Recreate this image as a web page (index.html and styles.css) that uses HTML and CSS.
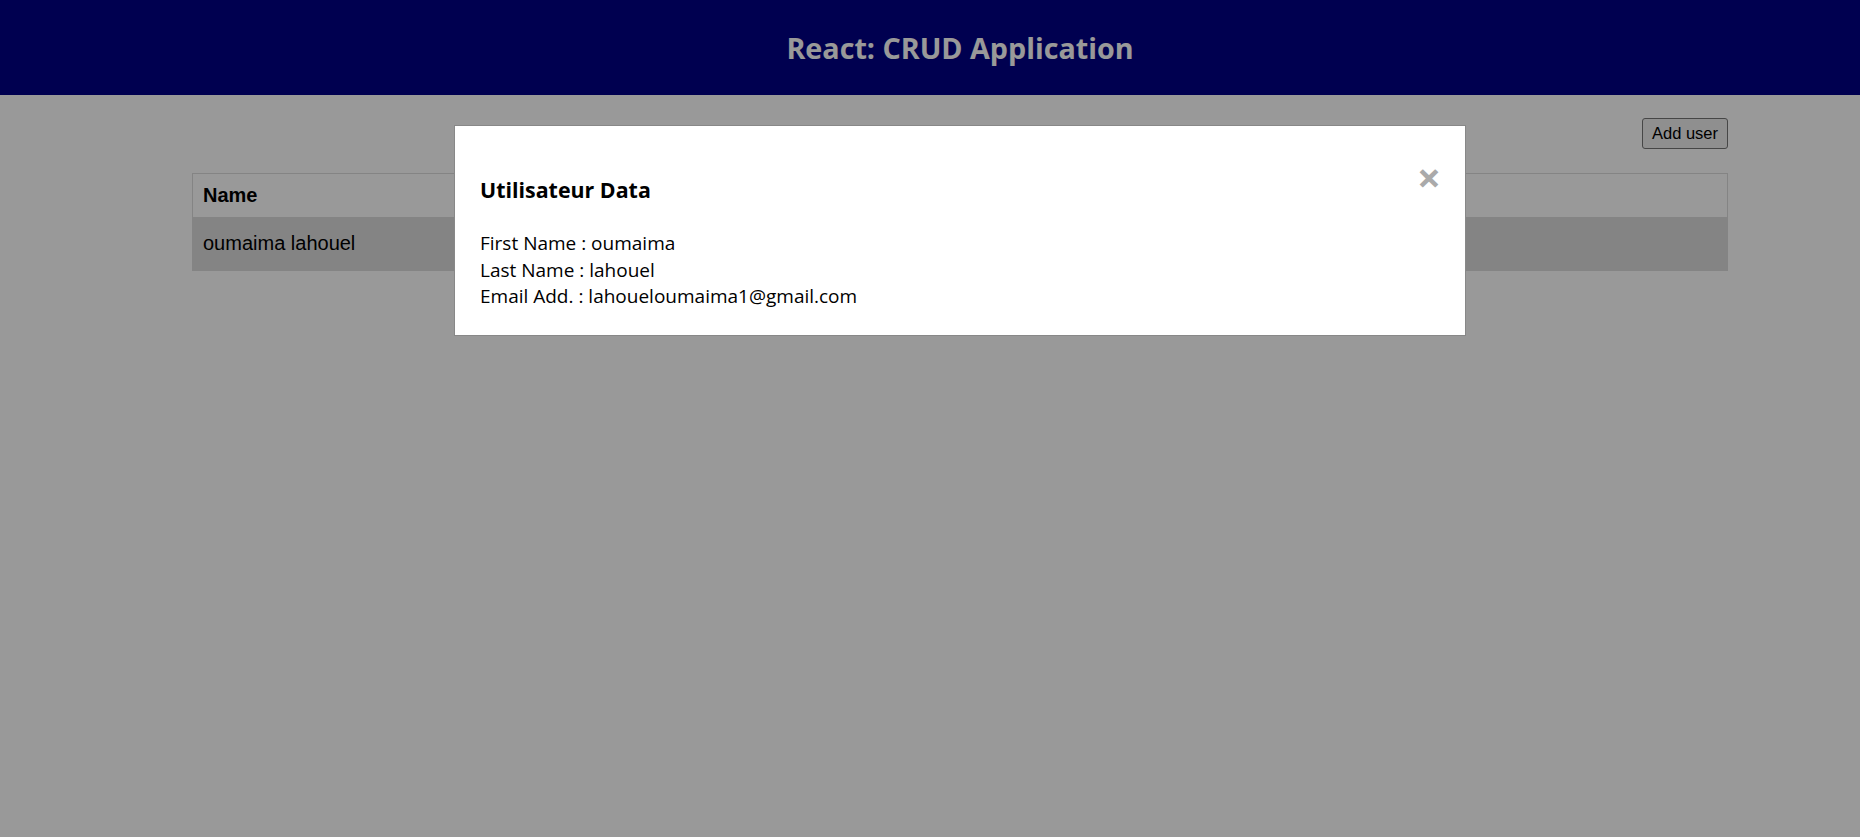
FILE: index.html
```html
<!DOCTYPE html>
<html lang="fr">
<head>
<meta charset="utf-8">
<title>React: CRUD Application</title>
<link rel="stylesheet" href="styles.css">
</head>
<body>
<header class="app-header">
  <h1 class="app-title">React: CRUD Application</h1>
</header>
<main class="content">
  <div class="toolbar">
    <button class="add-btn" type="button">Add user</button>
  </div>
  <table class="users">
    <thead>
      <tr><th>Name</th><th></th></tr>
    </thead>
    <tbody>
      <tr><td>oumaima lahouel</td><td></td></tr>
    </tbody>
  </table>
</main>
<div class="overlay">
  <div class="modal">
    <span class="close">&times;</span>
    <h3 class="modal-title">Utilisateur Data</h3>
    <div class="modal-body">
      <div>First Name : oumaima</div>
      <div>Last Name : lahouel</div>
      <div>Email Add. : lahoueloumaima1@gmail.com</div>
    </div>
  </div>
</div>
</body>
</html>
```
FILE: styles.css
```css
html, body {
  margin: 0;
  padding: 0;
  height: 100%;
}
body {
  background: #ffffff;
  font-family: "Liberation Sans", Arial, sans-serif;
  overflow: hidden;
}
.app-header {
  height: 95px;
  background: #000086;
  display: flex;
  align-items: center;
  justify-content: center;
  padding-left: 60px;
}
.app-title {
  margin: 0;
  color: #ffffff;
  font-family: "Open Sans", "Noto Sans", sans-serif;
  font-weight: 700;
  font-size: 28.7px;
}
.content {
  padding: 0 132px 0 192px;
}
.toolbar {
  display: flex;
  justify-content: flex-end;
  padding-top: 23px;
  height: 31px;
}
.add-btn {
  font-family: "Liberation Sans", Arial, sans-serif;
  font-size: 16.5px;
  height: 31px;
  padding: 0 9px;
  background: #efefef;
  border: 1px solid #767676;
  border-radius: 3px;
  color: #000;
}
.users {
  margin-top: 24px;
  width: 100%;
  border-collapse: collapse;
  border: 1px solid #dddddd;
  font-size: 20px;
  color: #000;
}
.users th {
  text-align: left;
  padding: 10px 10px;
  height: 23px;
  border-bottom: 1px solid #dddddd;
}
.users td {
  background: #dddddd;
  padding: 14px 10px 15px;
}
.overlay {
  position: fixed;
  inset: 0;
  background: rgba(0, 0, 0, 0.4);
  padding-left: 60px;
  padding-top: 125px;
  display: flex;
  justify-content: center;
  align-items: flex-start;
}
.modal {
  position: relative;
  width: 961px;
  background: #fff;
  border: 1px solid #888;
  padding: 20px 24px 25px 25px;
  font-family: "Open Sans", "Noto Sans", sans-serif;
  color: #000;
}
.close {
  position: absolute;
  top: 30px;
  right: 24px;
  color: #aaaaaa;
  font-size: 42px;
  font-weight: 700;
  line-height: 42px;
}
.modal-title {
  margin: 29px 0 0;
  font-size: 21.4px;
  font-weight: 700;
}
.modal-body {
  margin-top: 26px;
  font-size: 19px;
  line-height: 26.6px;
}
```
